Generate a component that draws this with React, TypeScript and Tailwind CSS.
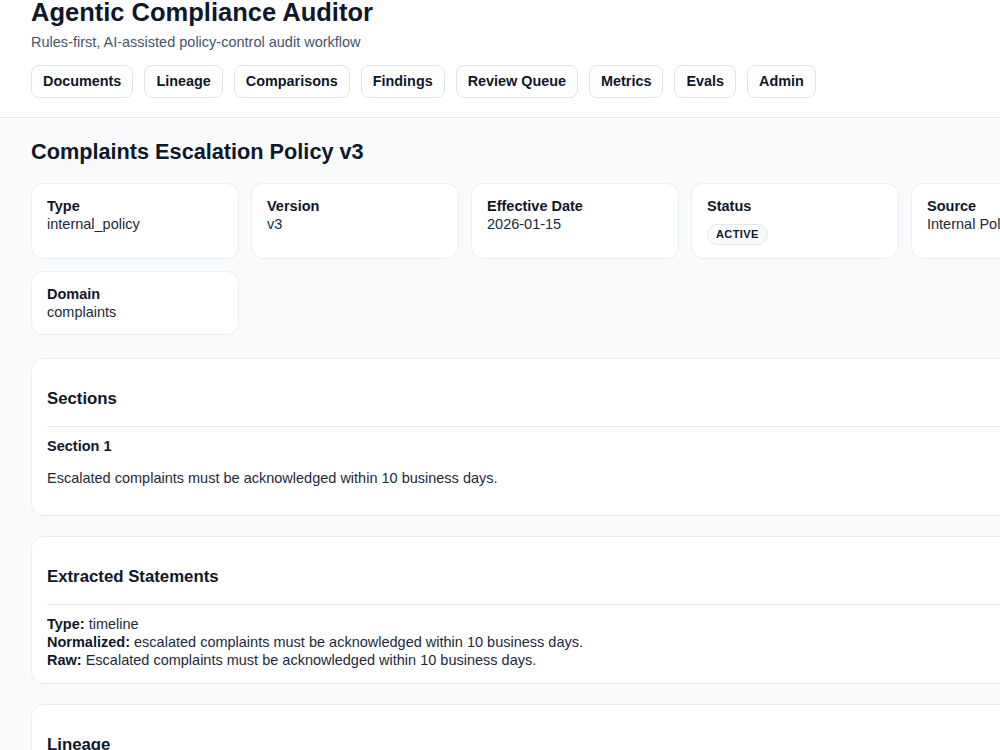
import React from "react";

const navItems = ["Documents", "Lineage", "Comparisons", "Findings", "Review Queue", "Metrics", "Evals", "Admin"];

function MetaCard({ label, children }: { label: string; children: React.ReactNode }) {
  return (
    <div className="bg-white border border-[#e9eef4] rounded-[12px] px-[15px] py-[13px]">
      <div className="text-[14.5px] leading-[18px] font-bold text-[#0f172a]">{label}</div>
      {children}
    </div>
  );
}

function Value({ children }: { children: React.ReactNode }) {
  return <div className="text-[14.5px] leading-[18px] text-[#1e293b]">{children}</div>;
}

function Card({ title, children }: { title: string; children: React.ReactNode }) {
  return (
    <div className="bg-white border border-[#e9eef4] rounded-[12px] px-[15px]">
      <div className="pt-[30px] pb-[17px] border-b border-[#e2e8f0]">
        <h3 className="text-[16.8px] leading-[20px] font-bold text-[#0f172a]">{title}</h3>
      </div>
      <div className="pt-[10px] pb-[14px]">{children}</div>
    </div>
  );
}

export default function App() {
  return (
    <div
      className="w-[1000px] min-h-screen overflow-hidden bg-[#f8fafc]"
      style={{ fontFamily: '"Liberation Sans", Arial, sans-serif' }}
    >
      <div className="w-[1150px]">
        <header className="bg-white border-b border-[#e2e8f0] px-[31px] pb-[19px]">
          <h1 className="text-[25.5px] leading-[25px] font-bold text-[#0f172a]">Agentic Compliance Auditor</h1>
          <p className="mt-[7px] text-[14.5px] leading-[20px] text-[#475569]">
            Rules-first, AI-assisted policy-control audit workflow
          </p>
          <nav className="mt-[13px] flex gap-[11px]">
            {navItems.map((n) => (
              <button
                key={n}
                className="h-[33px] bg-white border border-[#dfe5ec] rounded-[8px] px-[11px] text-[14.4px] leading-[17px] font-bold text-[#0f172a]"
              >
                {n}
              </button>
            ))}
          </nav>
        </header>

        <main className="px-[31px] pt-[21px]">
          <h2 className="text-[21.7px] leading-[26px] font-bold text-[#0f172a]">Complaints Escalation Policy v3</h2>

          <div className="mt-[18px] grid grid-cols-5 gap-x-[12px] gap-y-[12px] w-[1088px]">
            <MetaCard label="Type">
              <Value>internal_policy</Value>
            </MetaCard>
            <MetaCard label="Version">
              <Value>v3</Value>
            </MetaCard>
            <MetaCard label="Effective Date">
              <Value>2026-01-15</Value>
            </MetaCard>
            <MetaCard label="Status">
              <div className="mt-[6px]">
                <span className="inline-block rounded-full border border-[#e2e8f0] bg-[#f8fafc] px-[8px] py-[3px] text-[11px] leading-[13px] font-bold tracking-[0.4px] text-[#0f172a]">
                  ACTIVE
                </span>
              </div>
            </MetaCard>
            <MetaCard label="Source">
              <Value>Internal Policy Library</Value>
            </MetaCard>
            <MetaCard label="Domain">
              <Value>complaints</Value>
            </MetaCard>
          </div>

          <div className="mt-[23px] w-[1088px] flex flex-col gap-[20px]">
            <Card title="Sections">
              <div className="text-[14.5px] leading-[18px] font-bold text-[#0f172a]">Section 1</div>
              <p className="my-[14px] text-[14.5px] leading-[18px] text-[#1e293b]">
                Escalated complaints must be acknowledged within 10 business days.
              </p>
            </Card>

            <Card title="Extracted Statements">
              <div className="text-[14.5px] leading-[18px] text-[#1e293b]">
                <div>
                  <span className="font-bold text-[#0f172a]">Type:</span> timeline
                </div>
                <div>
                  <span className="font-bold text-[#0f172a]">Normalized:</span> escalated complaints must be
                  acknowledged within 10 business days.
                </div>
                <div>
                  <span className="font-bold text-[#0f172a]">Raw:</span> Escalated complaints must be acknowledged
                  within 10 business days.
                </div>
              </div>
            </Card>

            <Card title="Lineage">
              <div className="text-[14.5px] leading-[18px] text-[#1e293b]">
                <div>
                  <span className="font-bold text-[#0f172a]">Supersedes:</span> Complaints Escalation Policy v2
                </div>
              </div>
            </Card>
          </div>
        </main>
      </div>
    </div>
  );
}
